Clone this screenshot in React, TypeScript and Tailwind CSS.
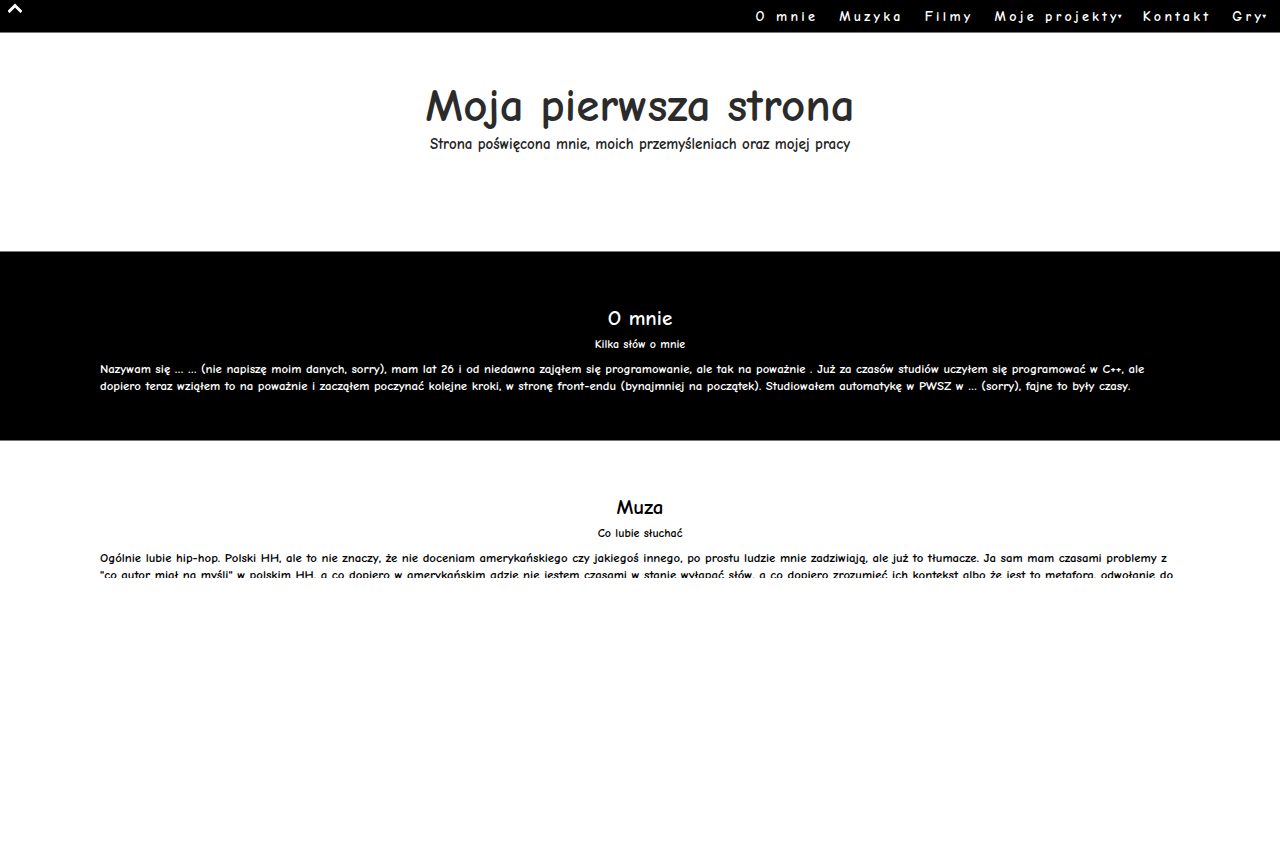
import React from 'react';

const font = { fontFamily: '"Comic Sans MS", "Comic Neue", "DejaVu Sans", sans-serif' };

const navItems = [
  { label: 'O mnie' },
  { label: 'Muzyka' },
  { label: 'Filmy' },
  { label: 'Moje projekty', dropdown: true },
  { label: 'Kontakt' },
  { label: 'Gry', dropdown: true },
];

export default function App() {
  return (
    <div className="min-h-[853px] bg-white" style={font}>
      {/* Top navigation */}
      <nav className="h-[33px] bg-black border-b border-[#777] flex items-start justify-between">
        <button className="pl-[8px] pt-[2px] text-white">
          <svg width="14" height="10" viewBox="0 0 14 10" className="mt-[1px]">
            <path d="M1.5 8 L7 2.5 L12.5 8" stroke="white" strokeWidth="3" fill="none" strokeLinecap="square" />
          </svg>
        </button>
        <ul className="flex items-center h-[32px] pr-[14px] gap-[21px]">
          {navItems.map(item => (
            <li key={item.label} className="text-white text-[14px] font-bold tracking-[3.3px] flex items-center">
              {item.label}
              {item.dropdown && <span className="text-[5px] tracking-normal ml-[-2px] mt-[2px]">▼</span>}
            </li>
          ))}
        </ul>
      </nav>

      {/* Header */}
      <header className="h-[218px] flex flex-col items-center pt-[45px]">
        <h1 className="text-[#2b2b2b] text-[47px] leading-[56px] font-bold">Moja pierwsza strona</h1>
        <p className="text-[#222] text-[15px] leading-[18px] mt-[1px] font-bold">Strona poświęcona mnie, moich przemyśleniach oraz mojej pracy</p>
      </header>

      {/* O mnie */}
      <section className="bg-black border-t border-b border-[#777] h-[190px] pt-[53px]">
        <div className="max-w-[1080px] mx-auto text-white font-bold">
          <h2 className="text-center text-[21px] leading-[26px]">O mnie</h2>
          <p className="text-center text-[12px] leading-[16px] mt-[5px]">Kilka słów o mnie</p>
          <p className="text-[12.8px] leading-[17px] mt-[8px]">
            Nazywam się … … (nie napiszę moim danych, sorry), mam lat 26 i od niedawna zająłem się programowanie, ale tak na poważnie . Już za czasów studiów uczyłem się programować w C++, ale dopiero teraz wziąłem to na poważnie i zacząłem poczynać kolejne kroki, w stronę front-endu (bynajmniej na początek). Studiowałem automatykę w PWSZ w … (sorry), fajne to były czasy.
          </p>
        </div>
      </section>

      {/* Muza */}
      <section className="h-[137px] overflow-hidden pt-[53px]">
        <div className="max-w-[1080px] mx-auto text-black font-bold">
          <h2 className="text-center text-[21px] leading-[26px]">Muza</h2>
          <p className="text-center text-[12px] leading-[16px] mt-[5px]">Co lubie słuchać</p>
          <p className="text-[12.8px] leading-[17px] mt-[8px]">
            Ogólnie lubie hip-hop. Polski HH, ale to nie znaczy, że nie doceniam amerykańskiego czy jakiegoś innego, po prostu ludzie mnie zadziwiają, ale już to tłumacze. Ja sam mam czasami problemy z "co autor miał na myśli" w polskim HH, a co dopiero w amerykańskim gdzie nie jestem czasami w stanie wyłapać słów, a co dopiero zrozumieć ich kontekst albo że jest to metafora, odwołanie do czegoś innego.
          </p>
        </div>
      </section>
    </div>
  );
}
